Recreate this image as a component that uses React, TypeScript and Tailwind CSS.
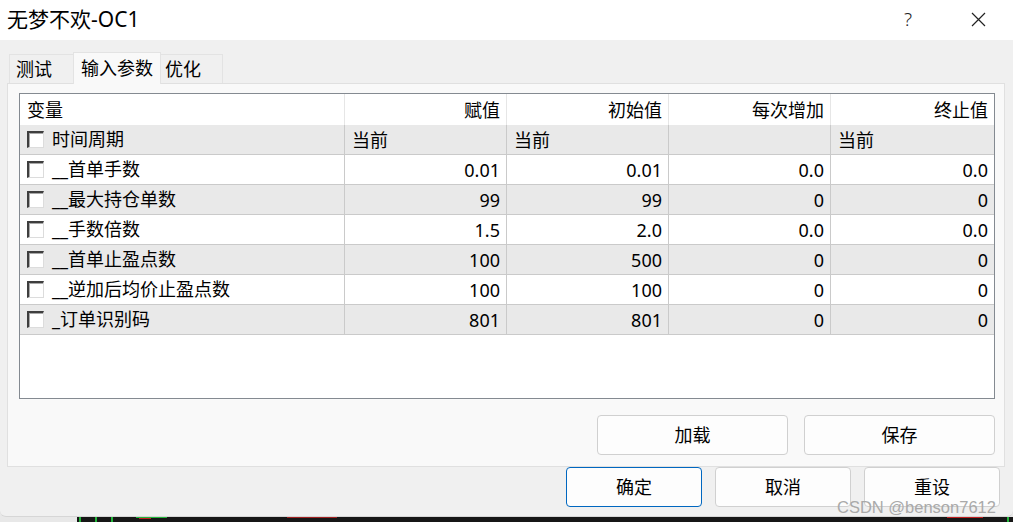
import React from "react";

const rows = [
  { name: "时间周期", v: ["当前", "当前", "", "当前"], left: true },
  { name: "__首单手数", v: ["0.01", "0.01", "0.0", "0.0"] },
  { name: "__最大持仓单数", v: ["99", "99", "0", "0"] },
  { name: "__手数倍数", v: ["1.5", "2.0", "0.0", "0.0"] },
  { name: "__首单止盈点数", v: ["100", "500", "0", "0"] },
  { name: "__逆加后均价止盈点数", v: ["100", "100", "0", "0"] },
  { name: "_订单识别码", v: ["801", "801", "0", "0"] },
];

const headers = ["赋值", "初始值", "每次增加", "终止值"];

function CheckBox() {
  return (
    <span className="box-border w-[17px] h-[17px] shrink-0 bg-white border-t-2 border-l-2 border-r border-b border-t-[#3e3e3e] border-l-[#3e3e3e] border-r-[#dcdcdc] border-b-[#dcdcdc] shadow-[inset_1px_1px_0_#a8a8a8]" />
  );
}

export default function App() {
  return (
    <div className="w-[1013px] h-[522px] overflow-hidden flex flex-col bg-[#e8e8e8] font-['Noto_Sans','Noto_Sans_CJK_SC',sans-serif] text-black relative">
      <div className="h-[517px] flex flex-col bg-[#f0f0f0] rounded-b-[6px] border-b border-[#d6d6d6]">
        {/* title bar */}
        <div className="h-[40px] bg-white flex items-center justify-between shrink-0">
          <span className="pl-[7px] text-[21px] leading-none pb-[2px]">无梦不欢-OC1</span>
          <div className="flex items-center h-full">
            <span className="w-[30px] mr-[20px] text-center text-[19px] leading-none font-light text-[#222] pb-[2px]">?</span>
            <span className="w-[70px] flex justify-center pb-[2px]">
              <svg width="15" height="15" viewBox="0 0 15 15">
                <path d="M1 1 L14 14 M14 1 L1 14" stroke="#222" strokeWidth="1.2" fill="none" />
              </svg>
            </span>
          </div>
        </div>

        {/* tabs */}
        <div className="flex items-end pl-[9px] pt-[12px] shrink-0">
          <div className="box-border w-[64px] h-[29px] bg-[#f0f0f0] border-l border-t border-[#e3e3e3] flex items-center pl-[6px] text-[18px] leading-none">测试</div>
          <div className="box-border w-[88px] h-[32px] bg-[#f9f9f9] border-l border-t border-r border-[#e3e3e3] flex items-center pl-[7px] pb-[2px] text-[18px] leading-none relative z-10 -mb-px">输入参数</div>
          <div className="box-border w-[62px] h-[29px] bg-[#f0f0f0] border-t border-r border-[#e3e3e3] flex items-center pl-[4px] text-[18px] leading-none">优化</div>
        </div>

        {/* panel */}
        <div className="box-border ml-[7px] mr-[8px] h-[384px] bg-[#f9f9f9] border border-[#e0e0e0] flex flex-col pl-[11px] pt-[9px] shrink-0">
          <div className="box-border w-[976px] h-[306px] border border-[#848a91] bg-white flex flex-col">
            {/* header */}
            <div className="grid grid-cols-[325px_162px_162px_162px_163px] h-[31px]">
              <div className="border-r border-[#e6e6e6] flex items-center pl-[7px] text-[18px] leading-none">变量</div>
              {headers.map((h, i) => (
                <div
                  key={h}
                  className={`${i < 3 ? "border-r border-[#e6e6e6]" : ""} flex items-center justify-end pr-[6px] text-[18px] leading-none`}
                >
                  {h}
                </div>
              ))}
            </div>
            {rows.map((r, ri) => (
              <div
                key={r.name}
                className={`grid grid-cols-[325px_162px_162px_162px_163px] h-[30px] border-b border-[#cacaca] ${ri % 2 === 0 ? "bg-[#e9e9e9]" : "bg-white"}`}
              >
                <div className="border-r border-[#cacaca] flex items-center pl-[7px] gap-[8px] text-[18px] leading-none">
                  <CheckBox />
                  <span className="pb-[1px]">{r.name}</span>
                </div>
                {r.v.map((v, i) => (
                  <div
                    key={i}
                    className={`${i < 3 ? "border-r border-[#cacaca]" : ""} flex items-center ${r.left ? "justify-start pl-[7px]" : "justify-end pr-[6px]"} text-[18px] leading-none`}
                  >
                    {v}
                  </div>
                ))}
              </div>
            ))}
          </div>
          <div className="flex justify-end gap-[16px] pr-[9px] pt-[16px]">
            <button className="box-border w-[191px] h-[40px] bg-[#fdfdfd] border border-[#d0d0d0] rounded-[4px] text-[18px] leading-none">加载</button>
            <button className="box-border w-[191px] h-[40px] bg-[#fdfdfd] border border-[#d0d0d0] rounded-[4px] text-[18px] leading-none">保存</button>
          </div>
        </div>

        {/* bottom buttons */}
        <div className="flex justify-end gap-[13px] pr-[13px] shrink-0">
          <button className="box-border w-[136px] h-[40px] bg-[#fdfdfd] border border-[#0067c0] rounded-[4px] text-[18px] leading-none">确定</button>
          <button className="box-border w-[136px] h-[40px] bg-[#fdfdfd] border border-[#d0d0d0] rounded-[4px] text-[18px] leading-none">取消</button>
          <button className="box-border w-[136px] h-[40px] bg-[#fdfdfd] border border-[#d0d0d0] rounded-[4px] text-[18px] leading-none">重设</button>
        </div>
      </div>

      {/* chart strip below window */}
      <div className="flex h-[5px]">
        <div className="w-[77px] bg-[#e8e8e8]" />
        <svg className="flex-1" height="5" viewBox="0 0 936 5" preserveAspectRatio="none">
          <rect x="0" y="0" width="936" height="5" fill="#161616" />
          <rect x="2" y="0" width="2" height="5" fill="#22b53a" />
          <rect x="18" y="0" width="2" height="5" fill="#22b53a" />
          <rect x="34" y="0" width="2" height="5" fill="#22b53a" />
          <rect x="59" y="0" width="31" height="1" fill="#22b53a" />
          <rect x="62" y="1" width="12" height="1" fill="#c02020" />
          <rect x="210" y="0" width="50" height="1" fill="#a02020" />
          <rect x="870" y="0" width="36" height="1" fill="#c02020" />
          <rect x="930" y="0" width="2" height="5" fill="#22b53a" />
        </svg>
      </div>

      {/* watermark */}
      <span className="absolute left-[837px] top-[499px] text-[16.5px] leading-none text-[#a9a9a9] font-['Liberation_Sans',sans-serif]">CSDN @benson7612</span>
    </div>
  );
}
